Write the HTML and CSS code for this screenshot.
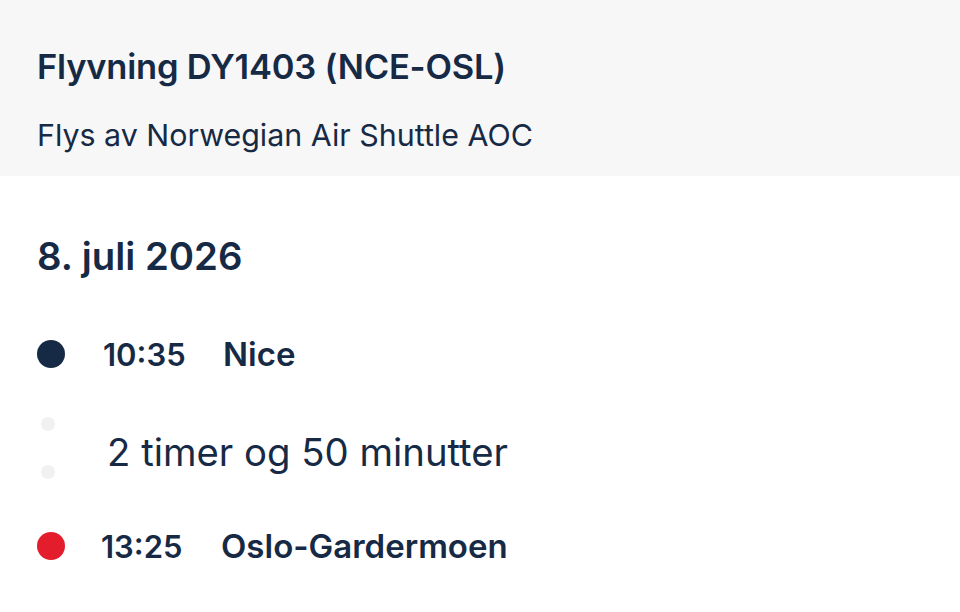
FILE: index.html
```html
<!DOCTYPE html>
<html lang="no">
<head>
<meta charset="utf-8">
<link rel="stylesheet" href="styles.css">
</head>
<body>
<header class="head">
  <h1 class="title">Flyvning DY1403 (NCE-OSL)</h1>
  <p class="sub">Flys av Norwegian Air Shuttle AOC</p>
</header>
<main class="main">
  <h2 class="date">8. juli 2026</h2>
  <div class="stop">
    <span class="dot dep"></span>
    <span class="time">10:35</span>
    <span class="place">Nice</span>
  </div>
  <div class="dur">
    <div class="minis"><span class="mini"></span><span class="mini"></span></div>
    <span class="durtext">2 timer og 50 minutter</span>
  </div>
  <div class="stop">
    <span class="dot arr"></span>
    <span class="time">13:25</span>
    <span class="place">Oslo-Gardermoen</span>
  </div>
</main>
</body>
</html>
```
FILE: styles.css
```css
* { box-sizing: border-box; }
html, body { margin: 0; padding: 0; background: #fff; }
body {
  font-family: Inter, "Noto Sans", sans-serif;
  color: #172a45;
  width: 960px;
  height: 612px;
  overflow: hidden;
}
.head {
  background: #f7f7f8;
  height: 176px;
  padding: 45px 37px 0;
}
.title {
  margin: 0;
  font-size: 34.5px;
  font-weight: 600;
  line-height: 44px;
  letter-spacing: -0.2px;
}
.sub {
  margin: 28px 0 0;
  font-size: 30.4px;
  font-weight: 400;
  line-height: 36px;
}
.main {
  padding: 55px 37px 0;
}
.date {
  margin: 0;
  font-size: 38.3px;
  font-weight: 600;
  line-height: 50px;
}
.stop {
  display: flex;
  align-items: center;
  height: 40px;
  margin-top: 53px;
}
.dur + .stop { margin-top: 0; }
.dot {
  width: 28px;
  height: 28px;
  border-radius: 50%;
  flex: none;
}
.dep { background: #172a45; }
.arr { background: #e31d2c; }
.time {
  margin-left: 38px;
  font-size: 31px;
  font-weight: 600;
  width: 120px;
}
.stop:last-child .time { margin-left: 36px; }
.place {
  font-size: 33px;
  font-weight: 600;
}
.dur {
  display: flex;
  align-items: center;
  height: 152px;
}
.minis {
  width: 28px;
  display: flex;
  flex-direction: column;
  align-items: center;
  gap: 34px;
  margin-left: -3px;
  margin-bottom: 4px;
}
.mini {
  width: 14px;
  height: 14px;
  border-radius: 50%;
  background: #f1f1f2;
}
.durtext {
  margin-left: 45px;
  margin-top: 3px;
  font-size: 38.3px;
  font-weight: 400;
}
```
